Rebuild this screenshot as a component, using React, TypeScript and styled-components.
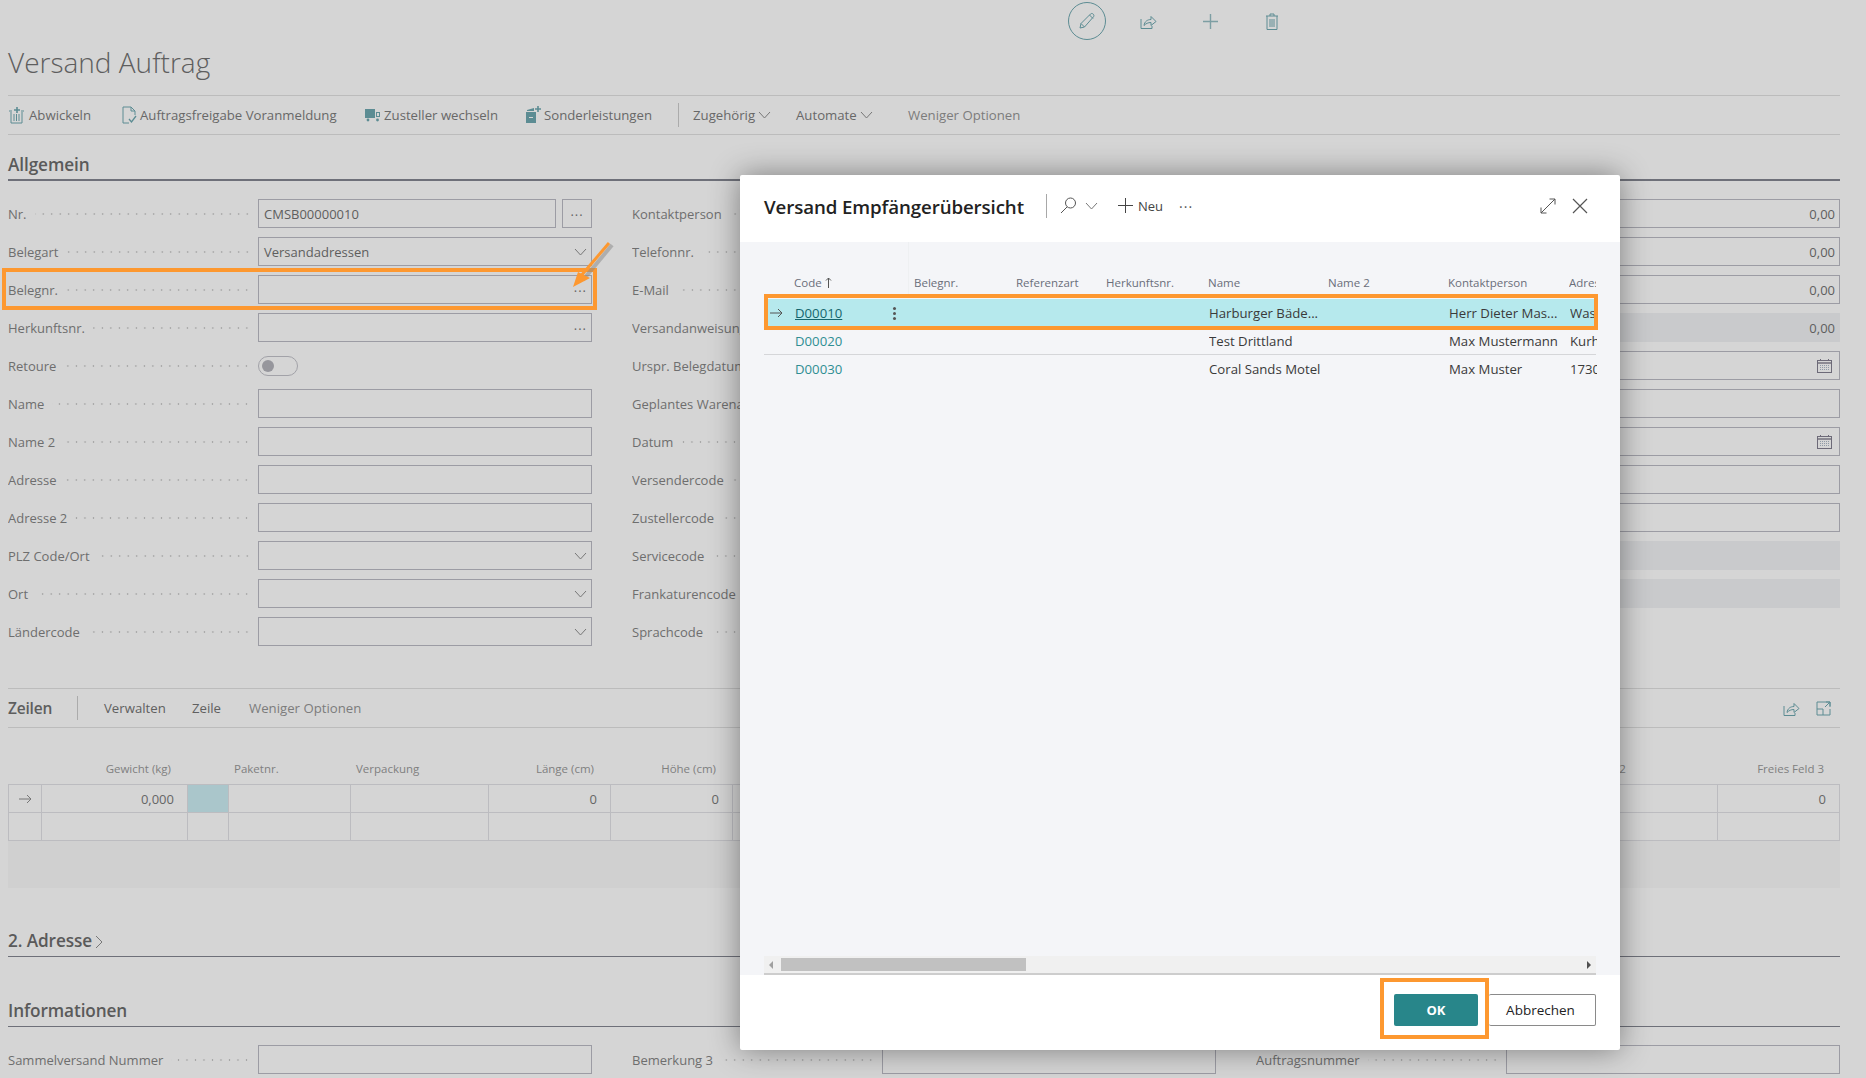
import React from 'react'
import styled, { createGlobalStyle } from 'styled-components'

const FONT = '"Open Sans", "Noto Sans", sans-serif'
const TEAL = '#5c8c93'
const ORANGE = '#fd9830'

const Global = createGlobalStyle`
  html, body {
    margin: 0;
    height: 100%;
    overflow: hidden;
    background: #d5d5d5;
    font-family: ${FONT};
  }
  * { box-sizing: border-box; }
`

const Page = styled.div`
  position: relative;
  width: 1866px;
  height: 1078px;
  overflow: hidden;
  padding: 0 26px 0 8px;
  background: #d5d5d5;
`

const ActionBar = styled.div`
  display: flex;
  align-items: center;
  height: 42px;
  padding: 2px 0 2px 1060px;
`

const EditCircle = styled.div`
  width: 38px;
  height: 38px;
  margin-right: 11px;
  border: 1px solid ${TEAL};
  border-radius: 50%;
  display: flex;
  align-items: center;
  justify-content: center;
`

const ActionIcon = styled.div`
  width: 62px;
  display: flex;
  justify-content: center;
  color: ${TEAL};
`

const PageTitle = styled.h1`
  margin: 0;
  height: 54px;
  padding-top: 2px;
  font-size: 28px;
  line-height: 36px;
  font-weight: 300;
  color: #5e5e5e;
  border-bottom: 1px solid #bcbcbc;
`

const ToolBar = styled.div`
  display: flex;
  align-items: center;
  height: 39px;
  border-bottom: 1px solid #bcbcbc;
  color: #686868;
  font-size: 13.2px;
`

const ToolItem = styled.div<{ $w: number; $muted?: boolean; $ml?: number }>`
  display: flex;
  align-items: center;
  gap: 3px;
  flex: 0 0 ${p => p.$w}px;
  margin-left: ${p => p.$ml ?? 0}px;
  white-space: nowrap;
  color: ${p => (p.$muted ? '#7c7c7c' : '#686868')};
  svg { flex: none; }
`

const ToolSep = styled.div`
  width: 1px;
  height: 24px;
  background: #ababab;
`

const SectionHead = styled.div<{ $h: number; $rule?: number }>`
  display: flex;
  align-items: flex-end;
  gap: 3px;
  height: ${p => p.$h}px;
  padding-bottom: ${p => (p.$rule === 2 ? 3 : 4)}px;
  border-bottom: ${p => p.$rule ?? 1}px solid #6e7079;
  font-size: 17.2px;
  line-height: 22px;
  font-weight: 600;
  letter-spacing: -0.1px;
  color: #5a5a5a;
`

const FormGrid = styled.div`
  display: grid;
  grid-template-columns: 584px 1fr;
  column-gap: 40px;
  margin-top: 18px;
`

const FormCol = styled.div`
  display: flex;
  flex-direction: column;
`

const Row = styled.div`
  position: relative;
  display: flex;
  align-items: flex-start;
  height: 38px;
`

const Label = styled.div`
  display: flex;
  align-items: center;
  flex: 0 0 243px;
  height: 29px;
  margin-right: 7px;
  font-size: 13px;
  color: #6e6e6e;
  white-space: nowrap;
  overflow: hidden;
`

const Dots = styled.span`
  flex: 1;
  height: 4px;
  margin-left: 8px;
  min-width: 0;
  background-image: radial-gradient(circle, #a6a6a6 0.8px, transparent 1.1px);
  background-size: 8.5px 4px;
  background-position: right center;
  background-repeat: repeat-x;
`

const Input = styled.div<{ $grey?: boolean }>`
  flex: 1;
  min-width: 0;
  height: 29px;
  display: flex;
  align-items: center;
  justify-content: space-between;
  padding: 0 4px 0 5px;
  font-size: 13px;
  color: #5e5e5e;
  border: 1px solid ${p => (p.$grey ? '#c9cacc' : '#9c9ca4')};
  background: ${p => (p.$grey ? '#c9cacc' : 'transparent')};
`

const ThreeDots = styled.span`
  color: #666;
  font-size: 13px;
  letter-spacing: 1px;
  line-height: 12px;
  padding-bottom: 6px;
`

const LookupBtn = styled.div`
  flex: 0 0 30px;
  height: 29px;
  margin-left: 6px;
  display: flex;
  align-items: center;
  justify-content: center;
  border: 1px solid #9c9ca4;
`

const Toggle = styled.div`
  width: 40px;
  height: 20px;
  margin-top: 5px;
  padding: 3px;
  border: 1px solid #a2a2a8;
  border-radius: 10px;
  &::before {
    content: '';
    display: block;
    width: 12px;
    height: 12px;
    border-radius: 50%;
    background: #96969c;
  }
`

const Mark = styled.div<{ $top: number; $left: number; $w: number; $h: number }>`
  position: absolute;
  top: ${p => p.$top}px;
  left: ${p => p.$left}px;
  width: ${p => p.$w}px;
  height: ${p => p.$h}px;
  border: 4px solid ${ORANGE};
  pointer-events: none;
`

const Pointer = styled.svg`
  position: absolute;
  top: 240px;
  left: 565px;
`

const LinesBar = styled.div`
  display: flex;
  align-items: center;
  height: 40px;
  margin-top: 33px;
  border-top: 1px solid #bcbcbc;
  border-bottom: 1px solid #bcbcbc;
  font-size: 13.2px;
  color: #606060;
`

const LinesTitle = styled.div`
  flex: 0 0 69px;
  font-size: 15.5px;
  font-weight: 600;
  letter-spacing: -0.2px;
  color: #5e5e5e;
`

const LinesSep = styled(ToolSep)`
  margin-right: 26px;
`

const LinesItem = styled.div<{ $w: number; $muted?: boolean }>`
  flex: 0 0 ${p => p.$w}px;
  white-space: nowrap;
  color: ${p => (p.$muted ? '#7c7c7c' : '#606060')};
`

const LinesIcons = styled.div`
  display: flex;
  align-items: center;
  gap: 16px;
  margin-left: auto;
  padding-right: 9px;
  color: ${TEAL};
`

const COLS = '33px 146px 41px 122px 138px 122px 122px 807px 178px 1fr'

const GridHead = styled.div`
  display: grid;
  grid-template-columns: ${COLS};
  align-items: center;
  height: 56px;
  padding: 31px 0 7px;
  font-size: 11.5px;
  color: #808080;
`

const HeadCell = styled.div<{ $right?: boolean }>`
  text-align: ${p => (p.$right ? 'right' : 'left')};
  padding: ${p => (p.$right ? '0 16px 0 0' : '0 0 0 6px')};
  white-space: nowrap;
`

const FreeHeadCell = styled(HeadCell)`
  padding-left: 20px;
`

const GridBody = styled.div`
  display: grid;
  grid-template-columns: ${COLS};
  grid-auto-rows: 28px;
  border-top: 1px solid #bcbcc0;
  border-left: 1px solid #bcbcc0;
`

const Cell = styled.div<{ $active?: boolean }>`
  display: flex;
  align-items: center;
  justify-content: flex-end;
  padding-right: 13px;
  font-size: 13px;
  color: #666;
  border-right: 1px solid #bcbcc0;
  border-bottom: 1px solid #bcbcc0;
  background: ${p => (p.$active ? '#aac6cb' : 'transparent')};
`

const ArrowCell = styled(Cell)`
  justify-content: center;
  padding: 0;
  color: #777;
`

const GridFill = styled.div`
  height: 47px;
  background: #d0d0d0;
`

const ExpandChevron = styled.svg`
  margin-bottom: 3px;
`

const BottomRow = styled.div`
  display: grid;
  grid-template-columns: 584px 584px 1fr;
  column-gap: 40px;
  margin-top: 18px;
`

const Modal = styled.div`
  position: absolute;
  top: 175px;
  left: 740px;
  width: 880px;
  height: 875px;
  display: flex;
  flex-direction: column;
  background: #fff;
  border-radius: 2px;
  box-shadow: 0 0 30px rgba(0, 0, 0, 0.42);
`

const ModalHead = styled.div`
  display: flex;
  align-items: center;
  flex: 0 0 67px;
  padding: 0 32px 6px 24px;
  color: #555;
`

const ModalTitle = styled.h2`
  margin: 2px 0 0;
  flex: 0 0 261px;
  white-space: nowrap;
  font-size: 18.7px;
  font-weight: 600;
  letter-spacing: -0.1px;
  color: #222;
`

const HeadSep = styled.div`
  width: 1px;
  height: 24px;
  margin: 0 13px 0 21px;
  background: #a8a8a8;
`

const SearchGap = styled.span`
  width: 8px;
`

const NewBtn = styled.div`
  display: flex;
  align-items: center;
  gap: 5px;
  margin-left: 20px;
  font-size: 13px;
  color: #444;
`

const MoreDots = styled.span`
  margin-left: 16px;
  padding-bottom: 6px;
  font-size: 14px;
  letter-spacing: 1px;
  color: #555;
`

const HeadRight = styled.div`
  display: flex;
  align-items: center;
  gap: 16px;
  margin-left: auto;
`

const ModalBody = styled.div`
  flex: 1;
  display: flex;
  flex-direction: column;
  padding: 0 24px;
  background: #f4f5f8;
  position: relative;
`

const LIST_COLS = '30px 120px 102px 90px 102px 120px 120px 121px 27px'

const FrozenEdge = styled.div`
  position: absolute;
  top: 0;
  left: 168px;
  width: 1px;
  height: 54px;
  background: #eef0f2;
`

const ListHead = styled.div`
  display: grid;
  grid-template-columns: ${LIST_COLS};
  align-items: center;
  height: 52px;
  padding-top: 29px;
  padding-bottom: 1px;
  font-size: 11.5px;
  color: #6a6e7a;
  overflow: hidden;
`

const ListHeadCell = styled.div`
  display: flex;
  align-items: center;
  gap: 3px;
  white-space: nowrap;
  overflow: hidden;
`

const ListRows = styled.div`
  flex: 1;
  display: flex;
  flex-direction: column;
  padding-top: 5px;
`

const ListRow = styled.div<{ $selected?: boolean; $rule?: boolean }>`
  position: relative;
  display: grid;
  grid-template-columns: ${LIST_COLS};
  align-items: center;
  height: 28px;
  padding-left: 1px;
  font-size: 13.2px;
  color: #3a3a3a;
  background: ${p => (p.$selected ? '#b6e9ed' : 'transparent')};
  border-bottom: ${p => (p.$rule ? '1px solid #d5d6d9' : 'none')};
`

const ListCell = styled.div`
  white-space: nowrap;
  overflow: hidden;
`

const ArrowSlot = styled(ListCell)`
  padding-left: 5px;
`

const CodeLink = styled.a<{ $selected?: boolean }>`
  display: flex;
  align-items: center;
  justify-content: space-between;
  padding-right: 19px;
  color: ${p => (p.$selected ? '#15666d' : '#2f8e93')};
  span { text-decoration: ${p => (p.$selected ? 'underline' : 'none')}; }
`

const Kebab = styled.i`
  display: block;
  width: 3px;
  height: 3px;
  border-radius: 50%;
  background: #555;
  box-shadow: 0 -5px 0 #555, 0 5px 0 #555;
`

const ScrollTrack = styled.div`
  display: flex;
  align-items: center;
  height: 17px;
  padding: 0 5px;
  background: #f0f0f0;
`

const ScrollThumb = styled.div`
  width: 245px;
  height: 13px;
  margin-left: 8px;
  background: #c1c1c1;
`

const ScrollArrow = styled.i<{ $right?: boolean }>`
  display: block;
  width: 0;
  height: 0;
  border-top: 4px solid transparent;
  border-bottom: 4px solid transparent;
  ${p => (p.$right ? 'border-left: 4px solid #505050; margin-left: auto;' : 'border-right: 4px solid #a0a0a0;')}
`

const ScrollFoot = styled.div`
  height: 2px;
  background: #cdcdcd;
`

const ModalFoot = styled.div`
  display: flex;
  align-items: flex-start;
  justify-content: flex-end;
  flex: 0 0 75px;
  padding: 19px 24px 0;
  position: relative;
`

const OkButton = styled.button`
  width: 84px;
  height: 32px;
  margin-right: 11px;
  border: 0;
  border-radius: 2px;
  background: #28868a;
  color: #fff;
  font: 700 13px ${FONT};
`

const CancelButton = styled.button`
  width: 107px;
  height: 32px;
  padding: 0 3px 0 0;
  border: 1px solid #8a8a8a;
  border-left: 0;
  border-radius: 2px;
  background: #fff;
  color: #222;
  font: 400 13.5px ${FONT};
`

const CalendarSvg = styled.svg`
  margin-right: 3px;
`

const ico = { fill: 'none', stroke: 'currentColor', strokeWidth: 1 } as const

const Chevron = ({ c = '#777' }: { c?: string }) => (
  <svg width="13" height="8" viewBox="0 0 13 8" fill="none" stroke={c}>
    <path d="M1 1l5.5 6L12 1" />
  </svg>
)

const Calendar = () => (
  <CalendarSvg width="15" height="15" viewBox="0 0 15 15" fill="none">
    <rect x="0.5" y="2.5" width="14" height="12" stroke="#6d6a78" />
    <path d="M1 5h13" stroke="#6d6a78" strokeWidth="1.4" />
    <path d="M3.5 1v2M11.5 1v2" stroke="#6d6a78" />
    <path d="M3 7.5h9M3 9.5h9M3 11.5h9" stroke="#8f9aa6" strokeDasharray="1 1" />
  </CalendarSvg>
)

const ShareIcon = ({ s = 17 }: { s?: number }) => (
  <svg width={s} height={s} viewBox="0 0 17 17" {...ico}>
    <path d="M1 6v9.5h11V13" />
    <path d="M4 12.5C4.5 8.5 7.5 6.5 11 6.5V3.5l5 5-5 4v-3C8 9.5 6 10.5 4 12.5z" />
  </svg>
)

const Field = ({ label, children }: { label: string; children?: React.ReactNode }) => (
  <Row>
    <Label>
      {label}
      <Dots />
    </Label>
    {children}
  </Row>
)

const leftRows: [string, 'plain' | 'select' | 'lookup'][] = [
  ['Name', 'plain'],
  ['Name 2', 'plain'],
  ['Adresse', 'plain'],
  ['Adresse 2', 'plain'],
  ['PLZ Code/Ort', 'select'],
  ['Ort', 'select'],
  ['Ländercode', 'select'],
]

const rightRows: { label: string; value?: string; grey?: boolean; date?: boolean; none?: boolean }[] = [
  { label: 'Kontaktperson', value: '0,00' },
  { label: 'Telefonnr.', value: '0,00' },
  { label: 'E-Mail', value: '0,00' },
  { label: 'Versandanweisung', value: '0,00', grey: true },
  { label: 'Urspr. Belegdatum', date: true },
  { label: 'Geplantes Warenausgangsdatum' },
  { label: 'Datum', date: true },
  { label: 'Versendercode' },
  { label: 'Zustellercode' },
  { label: 'Servicecode', grey: true },
  { label: 'Frankaturencode', grey: true },
  { label: 'Sprachcode', none: true },
]

const listRows = [
  { code: 'D00010', name: 'Harburger Bäde...', contact: 'Herr Dieter Mas...', addr: 'Wasser', selected: true },
  { code: 'D00020', name: 'Test Drittland', contact: 'Max Mustermann', addr: 'Kurhaus', rule: true },
  { code: 'D00030', name: 'Coral Sands Motel', contact: 'Max Muster', addr: '1730 Blue' },
]

export default function App() {
  return (
    <Page>
      <Global />

      <ActionBar>
        <EditCircle>
          <svg width="18" height="18" viewBox="0 0 18 18" fill="none" stroke={TEAL}>
            <path d="M2 16l1-4.5L12.5 2c.8-.7 2-.7 2.8.2.8.8.8 2 0 2.8L6.5 15z" />
            <path d="M3 11.5L6.5 15M11.5 3l3.5 3.5" />
          </svg>
        </EditCircle>
        <ActionIcon><ShareIcon /></ActionIcon>
        <ActionIcon>
          <svg width="17" height="17" viewBox="0 0 17 17" fill="none" stroke="#7d9ea3" strokeWidth="1.4">
            <path d="M8.5 1v15M1 8.5h15" />
          </svg>
        </ActionIcon>
        <ActionIcon>
          <svg width="14" height="17" viewBox="0 0 14 17" {...ico}>
            <path d="M1 3h12M5 3V1h4v2M2 3v13.5h10V3M5 6v8M7 6v8M9 6v8" />
          </svg>
        </ActionIcon>
      </ActionBar>

      <PageTitle>Versand Auftrag</PageTitle>

      <ToolBar>
        <ToolItem $w={113} $ml={1}>
          <svg width="17" height="18" viewBox="0 0 17 18" fill="none" stroke={TEAL}>
            <path d="M2 6v11h11V6M0 5h3M12 5h3M5 8v7M7.5 8v7M10 8v7" />
            <path d="M8 1v6M5 4h6" strokeWidth="1.6" />
          </svg>
          Abwickeln
        </ToolItem>
        <ToolItem $w={243}>
          <svg width="15" height="18" viewBox="0 0 15 18" fill="none" stroke={TEAL}>
            <path d="M1 1h8l4 4v4M9 1v4h4M7 17H1V1" />
            <path d="M7 13l2.5 3L14 10" strokeWidth="1.3" />
          </svg>
          Auftragsfreigabe Voranmeldung
        </ToolItem>
        <ToolItem $w={160}>
          <svg width="16" height="14" viewBox="0 0 16 14" fill={TEAL}>
            <rect x="0" y="1" width="10" height="9" />
            <rect x="11.5" y="4.5" width="3" height="4" fill="none" stroke={TEAL} />
            <circle cx="3" cy="12" r="1.4" />
            <circle cx="12.5" cy="12" r="1.4" />
          </svg>
          Zusteller wechseln
        </ToolItem>
        <ToolItem $w={153}>
          <svg width="16" height="18" viewBox="0 0 16 18" fill={TEAL}>
            <path d="M1 6h10v11H1zM2 4l7-2v3H2z" />
            <path d="M4 11h4v1H4z" fill="#d5d5d5" />
            <path d="M13 0v6M10 3h6" stroke={TEAL} strokeWidth="1.6" />
          </svg>
          Sonderleistungen
        </ToolItem>
        <ToolSep />
        <ToolItem $w={103} $ml={14}>
          Zugehörig <Chevron />
        </ToolItem>
        <ToolItem $w={112}>
          Automate <Chevron />
        </ToolItem>
        <ToolItem $w={120} $muted>Weniger Optionen</ToolItem>
      </ToolBar>

      <SectionHead $h={46} $rule={2}>Allgemein</SectionHead>

      <FormGrid>
        <FormCol>
          <Field label="Nr.">
            <Input>CMSB00000010</Input>
            <LookupBtn><ThreeDots>...</ThreeDots></LookupBtn>
          </Field>
          <Field label="Belegart">
            <Input>Versandadressen <Chevron /></Input>
          </Field>
          <Field label="Belegnr.">
            <Input><span /><ThreeDots>...</ThreeDots></Input>
            <Mark $top={-7} $left={-6} $w={595} $h={42} />
          </Field>
          <Field label="Herkunftsnr.">
            <Input><span /><ThreeDots>...</ThreeDots></Input>
          </Field>
          <Field label="Retoure"><Toggle /></Field>
          {leftRows.map(([label, kind]) => (
            <Field key={label} label={label}>
              <Input>
                <span />
                {kind === 'select' && <Chevron />}
              </Input>
            </Field>
          ))}
        </FormCol>
        <FormCol>
          {rightRows.map(r => (
            <Field key={r.label} label={r.label}>
              {!r.none && (
                <Input $grey={r.grey}>
                  <span />
                  {r.value}
                  {r.date && <Calendar />}
                </Input>
              )}
            </Field>
          ))}
        </FormCol>
      </FormGrid>

      <LinesBar>
        <LinesTitle>Zeilen</LinesTitle>
        <LinesSep />
        <LinesItem $w={88}>Verwalten</LinesItem>
        <LinesItem $w={57}>Zeile</LinesItem>
        <LinesItem $w={120} $muted>Weniger Optionen</LinesItem>
        <LinesIcons>
          <ShareIcon />
          <svg width="15" height="15" viewBox="0 0 15 15" {...ico}>
            <path d="M14 6V1H1v13h13V8M1 8h6v6M9 6l5-5M10 1h4v4" />
          </svg>
        </LinesIcons>
      </LinesBar>

      <GridHead>
        <HeadCell />
        <HeadCell $right>Gewicht (kg)</HeadCell>
        <HeadCell />
        <HeadCell>Paketnr.</HeadCell>
        <HeadCell>Verpackung</HeadCell>
        <HeadCell $right>Länge (cm)</HeadCell>
        <HeadCell $right>Höhe (cm)</HeadCell>
        <HeadCell />
        <FreeHeadCell>Freies Feld 2</FreeHeadCell>
        <HeadCell $right>Freies Feld 3</HeadCell>
      </GridHead>
      <GridBody>
        <ArrowCell>
          <svg width="13" height="10" viewBox="0 0 13 10" fill="none" stroke="currentColor">
            <path d="M0 5h12M8 1l4 4-4 4" />
          </svg>
        </ArrowCell>
        <Cell>0,000</Cell>
        <Cell $active />
        <Cell />
        <Cell />
        <Cell>0</Cell>
        <Cell>0</Cell>
        <Cell />
        <Cell />
        <Cell>0</Cell>
        {Array.from({ length: 10 }, (_, i) => <Cell key={i} />)}
      </GridBody>
      <GridFill />

      <SectionHead $h={69}>
        2. Adresse
        <ExpandChevron width="8" height="14" viewBox="0 0 8 14" fill="none" stroke="#777">
          <path d="M1 1l6 6-6 6" />
        </ExpandChevron>
      </SectionHead>
      <SectionHead $h={70}>Informationen</SectionHead>

      <BottomRow>
        <Field label="Sammelversand Nummer"><Input /></Field>
        <Field label="Bemerkung 3"><Input /></Field>
        <Field label="Auftragsnummer"><Input /></Field>
      </BottomRow>

      <Pointer width="50" height="52" viewBox="0 0 50 52">
        <path d="M45 3L16 38" stroke="#888" strokeOpacity="0.5" strokeWidth="4" fill="none" transform="translate(2 2)" />
        <path d="M44 3L15 37" stroke={ORANGE} strokeWidth="3" fill="none" />
        <path d="M8 47L13 32L25 38z" fill={ORANGE} />
      </Pointer>

      <Modal>
        <ModalHead>
          <ModalTitle>Versand Empfängerübersicht</ModalTitle>
          <HeadSep />
          <svg width="17" height="17" viewBox="0 0 17 17" fill="none" stroke="#555">
            <circle cx="10.5" cy="6" r="5" />
            <path d="M7 10L1 16" />
          </svg>
          <SearchGap />
          <Chevron />
          <NewBtn>
            <svg width="15" height="15" viewBox="0 0 15 15" fill="none" stroke="#444">
              <path d="M7.5 0v15M0 7.5h15" />
            </svg>
            Neu
          </NewBtn>
          <MoreDots>...</MoreDots>
          <HeadRight>
            <svg width="16" height="16" viewBox="0 0 16 16" fill="none" stroke="#555">
              <path d="M1 15L15 1M9.5 1H15v5.5M1 9.5V15h5.5" />
            </svg>
            <svg width="16" height="16" viewBox="0 0 16 16" fill="none" stroke="#555" strokeWidth="1.2">
              <path d="M1 1l14 14M15 1L1 15" />
            </svg>
          </HeadRight>
        </ModalHead>

        <ModalBody>
          <FrozenEdge />
          <ListHead>
            <ListHeadCell />
            <ListHeadCell>
              Code
              <svg width="7" height="11" viewBox="0 0 7 11" fill="none" stroke="#555">
                <path d="M3.5 11V1M1 3.5l2.5-2.5L6 3.5" />
              </svg>
            </ListHeadCell>
            <ListHeadCell>Belegnr.</ListHeadCell>
            <ListHeadCell>Referenzart</ListHeadCell>
            <ListHeadCell>Herkunftsnr.</ListHeadCell>
            <ListHeadCell>Name</ListHeadCell>
            <ListHeadCell>Name 2</ListHeadCell>
            <ListHeadCell>Kontaktperson</ListHeadCell>
            <ListHeadCell>Adresse</ListHeadCell>
          </ListHead>
          <ListRows>
            {listRows.map(r => (
              <ListRow key={r.code} $selected={r.selected} $rule={r.rule}>
                <ArrowSlot>
                  {r.selected && (
                    <svg width="13" height="10" viewBox="0 0 13 10" fill="none" stroke="#555">
                      <path d="M0 5h12M8 1l4 4-4 4" />
                    </svg>
                  )}
                </ArrowSlot>
                <CodeLink $selected={r.selected}>
                  <span>{r.code}</span>
                  {r.selected && <Kebab />}
                </CodeLink>
                <ListCell />
                <ListCell />
                <ListCell />
                <ListCell>{r.name}</ListCell>
                <ListCell />
                <ListCell>{r.contact}</ListCell>
                <ListCell>{r.addr}</ListCell>
                {r.selected && <Mark $top={-5} $left={0} $w={834} $h={36} />}
              </ListRow>
            ))}
          </ListRows>
          <ScrollTrack>
            <ScrollArrow />
            <ScrollThumb />
            <ScrollArrow $right />
          </ScrollTrack>
          <ScrollFoot />
        </ModalBody>

        <ModalFoot>
          <OkButton>OK</OkButton>
          <CancelButton>Abbrechen</CancelButton>
          <Mark $top={3} $left={640} $w={109} $h={61} />
        </ModalFoot>
      </Modal>
    </Page>
  )
}
